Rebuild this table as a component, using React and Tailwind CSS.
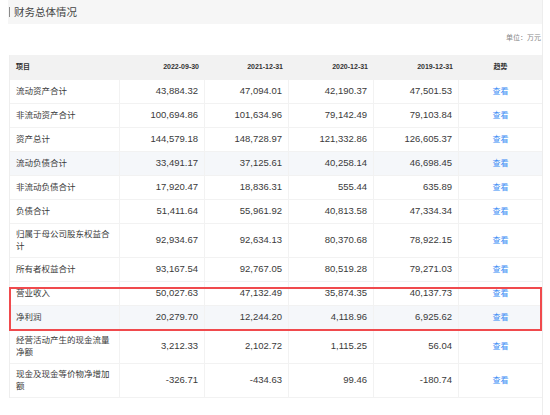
import React from "react";

const cols = ["2022-09-30", "2021-12-31", "2020-12-31", "2019-12-31"];

const rows = [
  { label: "流动资产合计", v: ["43,884.32", "47,094.01", "42,190.37", "47,501.53"] },
  { label: "非流动资产合计", v: ["100,694.86", "101,634.96", "79,142.49", "79,103.84"] },
  { label: "资产总计", v: ["144,579.18", "148,728.97", "121,332.86", "126,605.37"] },
  { label: "流动负债合计", v: ["33,491.17", "37,125.61", "40,258.14", "46,698.45"], hl: true },
  { label: "非流动负债合计", v: ["17,920.47", "18,836.31", "555.44", "635.89"] },
  { label: "负债合计", v: ["51,411.64", "55,961.92", "40,813.58", "47,334.34"] },
  { label: "归属于母公司股东权益合计", v: ["92,934.67", "92,634.13", "80,370.68", "78,922.15"], tall: true },
  { label: "所有者权益合计", v: ["93,167.54", "92,767.05", "80,519.28", "79,271.03"] },
  { label: "营业收入", v: ["50,027.63", "47,132.49", "35,874.35", "40,137.73"] },
  { label: "净利润", v: ["20,279.70", "12,244.20", "4,118.96", "6,925.62"], hl: true },
  { label: "经营活动产生的现金流量净额", v: ["3,212.33", "2,102.72", "1,115.25", "56.04"], tall: true },
  { label: "现金及现金等价物净增加额", v: ["-326.71", "-434.63", "99.46", "-180.74"], tall: true },
];

export default function App() {
  return (
    <div
      className="w-[550px] h-[415px] bg-white overflow-hidden"
      style={{ fontFamily: '"Liberation Sans", "Noto Sans CJK SC", sans-serif' }}
    >
      <div className="ml-[8px] w-[535px] h-[415px] border-r border-[#ededed]">
        {/* title bar */}
        <div className="h-[24px] bg-[#f6f6f6] flex items-center">
          <div className="w-[1.5px] h-[10px] bg-[#8a8a8a] ml-[0.5px]" />
          <span className="ml-[4px] text-[10.5px] leading-none text-[#444]">财务总体情况</span>
        </div>
        {/* unit */}
        <div className="h-[31px] flex justify-end items-start pt-[9px] pr-[1px]">
          <span className="text-[7px] leading-[10px] text-[#888]">单位：万元</span>
        </div>
        {/* table */}
        <div className="relative ml-[1px] w-[532px]">
          <div className="grid grid-cols-[110px_85px_84px_85px_85px_83px] border-l border-[#eeeeee]">
            {/* header */}
            <div className="h-[25px] bg-[#f2f2f2] flex items-center pl-[6px] text-[7px] font-bold text-[#333]">项目</div>
            {cols.map((c) => (
              <div key={c} className="h-[25px] bg-[#f2f2f2] flex items-center justify-end pr-[6px] text-[7px] font-bold text-[#333]">
                {c}
              </div>
            ))}
            <div className="h-[25px] bg-[#f2f2f2] flex items-center justify-center text-[7px] font-bold text-[#333]">趋势</div>

            {rows.map((r, i) => {
              const h = r.tall ? "h-[34px]" : "h-[24px]";
              const bg = r.hl ? "bg-[#f5f7fa]" : "bg-white";
              return (
                <React.Fragment key={i}>
                  <div className={`${h} ${bg} flex items-center pl-[6px] pr-[4px] border-r border-b border-[#f2f2f2]`}>
                    <span className="text-[8.5px] leading-[11.5px] text-[#3a3a3a]">{r.label}</span>
                  </div>
                  {r.v.map((x, j) => (
                    <div key={j} className={`${h} ${bg} flex items-center justify-end pr-[6px] border-r border-b border-[#f2f2f2] text-[9.5px] text-[#3a3a3a]`}>
                      {x}
                    </div>
                  ))}
                  <div className={`${h} ${bg} flex items-center justify-center border-b border-[#f2f2f2]`}>
                    <span className="text-[8px] text-[#3d8ef5]">查看</span>
                  </div>
                </React.Fragment>
              );
            })}
          </div>
          {/* red highlight box */}
          <div className="absolute left-0 top-[232px] w-[533px] h-[44px] border-2 border-[#f04a4d] pointer-events-none" />
        </div>
      </div>
    </div>
  );
}
